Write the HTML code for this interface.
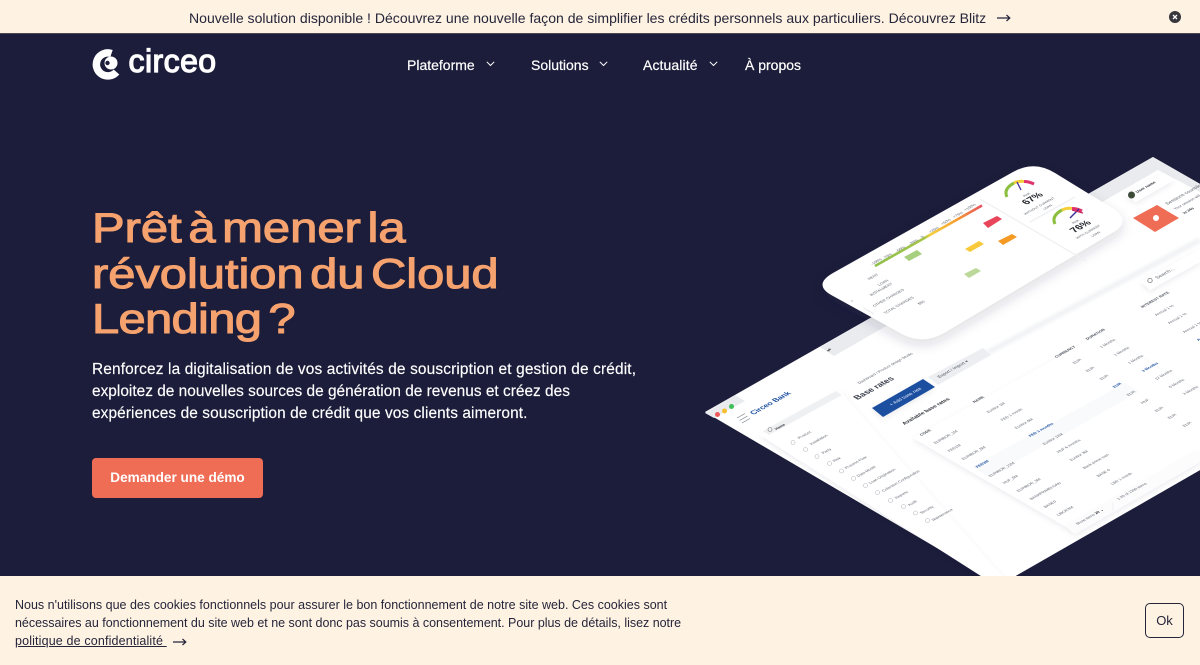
<!DOCTYPE html>
<html lang="fr"><head><meta charset="utf-8"><title>Circeo</title>
<style>
*{box-sizing:border-box;margin:0;padding:0}
html,body{width:1200px;height:665px;overflow:hidden;background:#1c1d3a;font-family:"Liberation Sans",sans-serif}
.t{position:absolute;white-space:nowrap;line-height:1}
#banner{position:absolute;left:0;top:0;width:1200px;height:34px;background:#fef3e3;border-bottom:1px solid #4a4950}
#banner .t{left:189px;top:11px;font-size:14.05px;color:#25253a}
nav a{position:absolute;top:58px;font-size:14px;line-height:14px;color:#fff;text-decoration:none;-webkit-text-stroke:.2px #fff;white-space:nowrap}
h1{position:absolute;left:92px;top:0;font-weight:400;font-size:42px;color:#f6a26e;-webkit-text-stroke:1.1px #f6a26e}
h1 span{position:absolute;left:0;white-space:nowrap;line-height:42px;transform:scaleX(1.165);transform-origin:0 0;word-spacing:-6px}
.p{position:absolute;left:92px;font-size:15.4px;line-height:15px;color:#fff;white-space:nowrap;-webkit-text-stroke:.15px #fff}
#cta{position:absolute;left:92px;top:458px;width:171px;height:40px;border-radius:4px;background:#ef6c55;color:#fff;font-weight:700;font-size:13.6px;line-height:40px;text-align:center;text-decoration:none}
#cookie{position:absolute;left:0;top:576px;width:1200px;height:89px;background:#fef3e3;color:#25253a}
#cookie .c{position:absolute;left:15px;font-size:12.5px;line-height:13px;white-space:nowrap}
#ok{position:absolute;left:1145px;top:27px;width:39px;height:35px;border:1px solid #25253a;border-radius:5px;font-size:13px;line-height:33px;text-align:center;color:#25253a}
#art{position:absolute;left:0;top:0;filter:blur(.35px)}
#art text{font-family:"Liberation Sans",sans-serif;font-size:4px;fill:#5f646f;translate:1.5px 1px}
#art .b{fill:#1c4fa0;font-weight:700}
#art .h{fill:#4b515c;font-weight:700}
#art .d{fill:#2a2e36;font-weight:700}
</style></head><body>

<svg id="art" width="1200" height="665" viewBox="0 0 1200 665">
<defs>
<filter id="sh" x="-20%" y="-20%" width="140%" height="140%"><feDropShadow dx="0" dy="5" stdDeviation="6" flood-color="#23264a" flood-opacity=".16"/></filter>
<filter id="sm" x="-20%" y="-20%" width="140%" height="140%"><feDropShadow dx="0" dy="2" stdDeviation="3" flood-color="#23264a" flood-opacity=".08"/></filter>
<filter id="bl"><feGaussianBlur stdDeviation="2"/></filter>
<linearGradient id="bar" x1="875" y1="0" x2="982" y2="0" gradientUnits="userSpaceOnUse">
<stop offset="0" stop-color="#8cbf4a"/><stop offset=".46" stop-color="#a6c64a"/><stop offset=".52" stop-color="#f7cf3e"/><stop offset=".75" stop-color="#f5a02f"/><stop offset="1" stop-color="#e8505f"/></linearGradient>
</defs>

<!-- main application plane -->
<polygon points="705,412 1153,157 1270,224 1270,430 1000,585" fill="#fff"/>
<!-- tab bar -->
<polygon points="820,347 1153,157 1200,184 1200,192 1158,170 834,356" fill="#e9ebee"/>
<polygon points="705,413 735,395 745,401 714,418" fill="#e9ebee"/>
<circle cx="717.500" cy="414.500" r="2.500" fill="#ee5a5a"/><circle cx="724.500" cy="411" r="2.500" fill="#f5c02f"/><circle cx="731.500" cy="406.500" r="2.500" fill="#3fbf57"/>
<path d="M827 351l4-2M829 348.500l0 3" stroke="#555" fill="none" stroke-width=".9"/>
<g stroke="#7a7f88" stroke-width=".7"><path d="M737 418l8-4.500M739.500 420.500l8-4.500M742 423l8-4.500"/></g>

<!-- sidebar sheet -->
<polygon points="760,435 840,391 1010,585 995,585" fill="#fff" filter="url(#sm)"/>
<polygon points="763,431 836,391 842,395 769,435" fill="#eef0f2"/>
<text transform="matrix(.87 -.49 .86 .5 775 429)" class="d" style="font-size:3.800px">Home</text>
<circle cx="770" cy="429.500" r="2" fill="none" stroke="#777" stroke-width=".6"/>
<text transform="matrix(.87 -.49 .86 .5 798 438)">Product</text>
<text transform="matrix(.87 -.49 .86 .5 810 444)">Installation</text>
<text transform="matrix(.87 -.49 .86 .5 822 453)">Party</text>
<text transform="matrix(.87 -.49 .86 .5 833 461)">Risk</text>
<text transform="matrix(.87 -.49 .86 .5 845 468)">Process Flow</text>
<text transform="matrix(.87 -.49 .86 .5 857 476)">Data Model</text>
<text transform="matrix(.87 -.49 .86 .5 869 483)">Loan Origination</text>
<text transform="matrix(.87 -.49 .86 .5 882 491)">Collection Configuration</text>
<text transform="matrix(.87 -.49 .86 .5 895 498)">Reports</text>
<text transform="matrix(.87 -.49 .86 .5 908 505)">Audit</text>
<text transform="matrix(.87 -.49 .86 .5 920 513)">Security</text>
<text transform="matrix(.87 -.49 .86 .5 932 520)">Maintenance</text>
<g fill="none" stroke="#b4b8bf" stroke-width=".6">
<circle cx="793" cy="442.500" r="2"/><circle cx="805.500" cy="449.500" r="2"/><circle cx="817" cy="456.500" r="2"/><circle cx="829.500" cy="463.500" r="2"/><circle cx="841.500" cy="471" r="2"/><circle cx="853.500" cy="478.500" r="2"/><circle cx="865.500" cy="485.500" r="2"/><circle cx="877.500" cy="492.500" r="2"/><circle cx="890.500" cy="500.500" r="2"/><circle cx="903.500" cy="506.500" r="2"/><circle cx="915.500" cy="513" r="2"/><circle cx="927.500" cy="520.500" r="2"/></g>
<text transform="matrix(.87 -.49 .86 .5 752 414)" class="b" style="font-size:7.500px">Circeo Bank</text>

<!-- content heading -->
<path d="M987 353L1200 240" stroke="#e6e8ec" stroke-width="3" filter="url(#bl)" fill="none"/>
<text transform="matrix(.87 -.49 .86 .5 858 383)">Dashboard  /  Product design Studio</text>
<text transform="matrix(.87 -.49 .86 .5 856 399)" style="font-size:8.500px;fill:#3d4250;font-weight:700">Base rates</text>
<polygon points="872,408 923,379 935,387 883,417" fill="#1c4fa0" filter="url(#sm)"/>
<text transform="matrix(.87 -.49 .86 .5 890 405)" style="fill:#e8eefa;font-size:5px">+ Add base rate</text>
<polygon points="928,377 983,348 991,355 938,385" fill="#eceef1"/>
<text transform="matrix(.87 -.49 .86 .5 938 377)" style="font-size:4.600px;fill:#4b5058">Export / Import ▾</text>
<text transform="matrix(.87 -.49 .86 .5 903 424)" class="d" style="font-size:5.500px">Available base rates</text>

<!-- table sheet -->
<polygon points="913,438 1100,334 1290,445 1290,399 1066,527" fill="#fff" filter="url(#sm)"/>
<polygon points="1066,527 1200,450 1200,462 1075,534" fill="#fcfcfd" filter="url(#sm)"/>
<polygon points="972,467 1125,383 1139,392 988,477" fill="#f9fafb"/>
<text transform="matrix(.87 -.49 .86 .5 920 435)" class="h">CODE</text>
<text transform="matrix(.87 -.49 .86 .5 973 402)" class="h">NAME</text>
<text transform="matrix(.87 -.49 .86 .5 1055 357)" class="h">CURRENCY</text>
<text transform="matrix(.87 -.49 .86 .5 1086 339)" class="h">DURATION</text>
<text transform="matrix(.87 -.49 .86 .5 1141 307)" class="h">INTEREST RATE</text>
<text transform="matrix(.87 -.49 .86 .5 934 443)">EURIBOR_1M</text>
<text transform="matrix(.87 -.49 .86 .5 948 451)">FED1M</text>
<text transform="matrix(.87 -.49 .86 .5 962 459)">EURIBOR_6M</text>
<text transform="matrix(.87 -.49 .86 .5 976 467)" class="b">FED3M</text>
<text transform="matrix(.87 -.49 .86 .5 989 476)">EURIBOR_12M</text>
<text transform="matrix(.87 -.49 .86 .5 1003 483)">HUF_6M</text>
<text transform="matrix(.87 -.49 .86 .5 1017 491)">EURIBOR_3M</text>
<text transform="matrix(.87 -.49 .86 .5 1030 499)">BANKPRIMELOAN</text>
<text transform="matrix(.87 -.49 .86 .5 1044 507)">BASE0</text>
<text transform="matrix(.87 -.49 .86 .5 1057 515)">LIBOR3M</text>
<text transform="matrix(.87 -.49 .86 .5 987 412)">Euribor 1M</text>
<text transform="matrix(.87 -.49 .86 .5 1001 420)">FED 1 month</text>
<text transform="matrix(.87 -.49 .86 .5 1015 428)">Euribor 6M</text>
<text transform="matrix(.87 -.49 .86 .5 1029 436)" class="b">FED 3 months</text>
<text transform="matrix(.87 -.49 .86 .5 1043 444)">Euribor 12M</text>
<text transform="matrix(.87 -.49 .86 .5 1057 452)">HUF 6 months</text>
<text transform="matrix(.87 -.49 .86 .5 1070 460)">Euribor 3M</text>
<text transform="matrix(.87 -.49 .86 .5 1083 468)">Bank prime loan</text>
<text transform="matrix(.87 -.49 .86 .5 1097 476)">BASE 0</text>
<text transform="matrix(.87 -.49 .86 .5 1111 484)">LBR 1 month</text>
<text transform="matrix(.87 -.49 .86 .5 1073 363)">EUR</text>
<text transform="matrix(.87 -.49 .86 .5 1086 371)">EUR</text>
<text transform="matrix(.87 -.49 .86 .5 1100 379)">EUR</text>
<text transform="matrix(.87 -.49 .86 .5 1113 387)" class="b">EUR</text>
<text transform="matrix(.87 -.49 .86 .5 1127 395)">EUR</text>
<text transform="matrix(.87 -.49 .86 .5 1141 403)">HUF</text>
<text transform="matrix(.87 -.49 .86 .5 1155 411)">EUR</text>
<text transform="matrix(.87 -.49 .86 .5 1168 418)">EUR</text>
<text transform="matrix(.87 -.49 .86 .5 1183 426)">EUR</text>
<text transform="matrix(.87 -.49 .86 .5 1100 347)">1 Months</text>
<text transform="matrix(.87 -.49 .86 .5 1114 355)">1 Months</text>
<text transform="matrix(.87 -.49 .86 .5 1128 363)">1 Months</text>
<text transform="matrix(.87 -.49 .86 .5 1142 371)" class="b">3 Months</text>
<text transform="matrix(.87 -.49 .86 .5 1155 379)">12 Months</text>
<text transform="matrix(.87 -.49 .86 .5 1169 387)">6 Months</text>
<text transform="matrix(.87 -.49 .86 .5 1183 394)">3 Months</text>
<text transform="matrix(.87 -.49 .86 .5 1155 315)">Annual 1 %</text>
<text transform="matrix(.87 -.49 .86 .5 1168 323)">Annual 1 %</text>
<text transform="matrix(.87 -.49 .86 .5 1183 332)">Annual 1 %</text>
<text transform="matrix(.87 -.49 .86 .5 1197 340)" class="b">Annual</text>
<text transform="matrix(.87 -.49 .86 .5 1076 524)">Show items  <tspan class="d">20 ⌄</tspan></text>
<text transform="matrix(.87 -.49 .86 .5 1117 499)">1-20 of 1200 items</text>
<path d="M1113 503L1113 511" stroke="#dfe1e5" stroke-width=".5"/>

<!-- top right widgets -->
<polygon points="1125,195 1164,173 1174,180 1136,202" fill="#fff" filter="url(#sm)"/>
<circle cx="1131.500" cy="195" r="3.500" fill="#3c4a38"/>
<text transform="matrix(.87 -.49 .86 .5 1136 192)" class="d" style="font-size:4.200px">User name</text>
<polygon points="1133,218 1157,205 1179,218 1155,232" fill="#ef6c55"/>
<circle cx="1156" cy="218" r="3" fill="#fff"/>
<text transform="matrix(.87 -.49 .86 .5 1166 204)" style="font-size:5px">Sessions countdown</text>
<text transform="matrix(.87 -.49 .86 .5 1174 209)">Your session will</text>
<text transform="matrix(.87 -.49 .86 .5 1183 213)" class="d">in 34s</text>
<polygon points="1141,282 1200,249 1200,262 1150,290" fill="#fff" filter="url(#sm)"/>
<circle cx="1150" cy="280.500" r="2.200" fill="none" stroke="#666" stroke-width=".7"/>
<text transform="matrix(.87 -.49 .86 .5 1156 278)" style="font-size:5px">Search...</text>

<!-- floating card -->
<path d="M833 273L1013 172Q1034 160 1055 173L1112 208Q1133 221 1112 233L944 333Q923 345 902 334L833 296Q812 285 833 273Z" fill="#fff" filter="url(#sh)"/>
<path d="M980 199L1086 261M1030 222L1075 197" stroke="#eef0f2" stroke-width="1.300" fill="none"/>
<path d="M875 266L982 205.500" stroke="url(#bar)" stroke-width="2.600" fill="none"/>
<text transform="matrix(.87 -.49 .86 .5 871 264)">-100%</text>
<text transform="matrix(.87 -.49 .86 .5 883 258)">-75%</text>
<text transform="matrix(.87 -.49 .86 .5 896 251)">-50%</text>
<text transform="matrix(.87 -.49 .86 .5 909 244)">-25%</text>
<text transform="matrix(.87 -.49 .86 .5 921 237)">0</text>
<text transform="matrix(.87 -.49 .86 .5 929 232)">+25%</text>
<text transform="matrix(.87 -.49 .86 .5 941 224)">+50%</text>
<text transform="matrix(.87 -.49 .86 .5 953 217)">+75%</text>
<text transform="matrix(.87 -.49 .86 .5 964 210)">+100%</text>
<text transform="matrix(.87 -.49 .86 .5 868 279)">RENT</text>
<text transform="matrix(.87 -.49 .86 .5 878 285)">LOAN</text>
<text transform="matrix(.87 -.49 .86 .5 870 295)">INSTALMENT</text>
<text transform="matrix(.87 -.49 .86 .5 873 306)">OTHER CHARGES</text>
<text transform="matrix(.87 -.49 .86 .5 884 313)">TOTAL CHARGES</text>
<text transform="matrix(.87 -.49 .86 .5 918 304)">$50</text>
<polygon points="904,257 917,250 922,254 909,261" fill="#a6cf7e"/>
<polygon points="965,249 979,241 984,244 970,252" fill="#f8c93b"/>
<polygon points="998,241 1012,234 1017,237 1003,245" fill="#f59a23"/>
<polygon points="983,223 997,216 1002,219 988,228" fill="#e8455a"/>
<polygon points="964,274 976,268 981,271 969,278" fill="#bcd99a"/>
<circle cx="852" cy="301" r="1.300" fill="#e2e4e8"/>
<path d="M864 308L874 314" stroke="#e5e7ea" stroke-width="1"/>

<!-- gauges -->
<g fill="none" stroke-width="3" stroke-linecap="butt">
<path d="M1007 197Q1003 189 1014 183" stroke="#8cbf3f"/>
<path d="M1014 183Q1019 180.500 1024 181.500" stroke="#f5cf3a"/>
<path d="M1024 181.500Q1029 181.500 1034 184" stroke="#e0336d"/>
<path d="M1017 182L1021 190" stroke="#3c2f9a" stroke-width="1.300"/>
</g>
<g fill="none" stroke-width="3" transform="translate(48 27)">
<path d="M1007 197Q1003 189 1014 183" stroke="#8cbf3f"/>
<path d="M1014 183Q1019 180.500 1024 181.500" stroke="#f5cf3a"/>
<path d="M1024 181.500Q1029 181.500 1034 184" stroke="#e0336d"/>
</g>
<path d="M1079 209L1070 218" stroke="#3c2f9a" stroke-width="1.400" fill="none"/>
<path d="M1072 210L1083 213" stroke="#c8245f" stroke-width="1.200" fill="none"/>
<text transform="matrix(.87 -.49 .86 .5 1023 196)" style="font-size:3.500px">Risk</text>
<text transform="matrix(.87 -.49 .86 .5 1025 204)" class="d" style="font-size:10px;fill:#22252c">67%</text>
<text transform="matrix(.87 -.49 .86 .5 1024 214)" style="font-size:3.500px">WITHOUT CURRENT</text>
<text transform="matrix(.87 -.49 .86 .5 1043 209)" style="font-size:3.500px">LOAN</text>
<text transform="matrix(.87 -.49 .86 .5 1072 223)" style="font-size:3.500px">Risk</text>
<text transform="matrix(.87 -.49 .86 .5 1073 232)" class="d" style="font-size:10px;fill:#22252c">76%</text>
<text transform="matrix(.87 -.49 .86 .5 1076 238)" style="font-size:3.500px">WITH CURRENT</text>
<text transform="matrix(.87 -.49 .86 .5 1091 236)" style="font-size:3.500px">LOAN</text>
</svg>

<div id="banner">
<span class="t">Nouvelle solution disponible ! Découvrez une nouvelle façon de simplifier les crédits personnels aux particuliers. Découvrez Blitz</span>
<svg style="position:absolute;left:997px;top:13px" width="14" height="10" viewBox="0 0 14 10"><path d="M0 5H12.500M9.500 2L12.800 5L9.500 8" fill="none" stroke="#25253a" stroke-width="1.200"/></svg>
<svg style="position:absolute;left:1168px;top:10px" width="14" height="14" viewBox="0 0 14 14"><circle cx="7" cy="7" r="6" fill="#37363c"/><path d="M5 5L9 9M9 5L5 9" stroke="#fff" stroke-width="1.300"/></svg>
</div>

<svg style="position:absolute;left:91px;top:49px" width="32" height="31" viewBox="0 0 32 31">
<path d="M20.500 4.500A11.500 11.500 0 1 0 25.500 23" fill="none" stroke="#fff" stroke-width="7.500"/>
<circle cx="20" cy="14" r="6.500" fill="#fff"/><circle cx="16.500" cy="14" r="2.200" fill="#1c1d3a"/>
</svg>
<div class="t" style="left:128.500px;top:43px;font-size:32px;line-height:36px;color:#fff;-webkit-text-stroke:1.200px #fff;letter-spacing:.45px">circeo</div>

<nav>
<a style="left:407px">Plateforme</a>
<svg style="position:absolute;left:486px;top:61px" width="9" height="6" viewBox="0 0 9 6"><path d="M.8 .8L4.500 4.500L8.200 .8" fill="none" stroke="#fff" stroke-width="1"/></svg>
<a style="left:531px">Solutions</a>
<svg style="position:absolute;left:598.500px;top:61px" width="9" height="6" viewBox="0 0 9 6"><path d="M.8 .8L4.500 4.500L8.200 .8" fill="none" stroke="#fff" stroke-width="1"/></svg>
<a style="left:643px;letter-spacing:.1px">Actualité</a>
<svg style="position:absolute;left:708.500px;top:61px" width="9" height="6" viewBox="0 0 9 6"><path d="M.8 .8L4.500 4.500L8.200 .8" fill="none" stroke="#fff" stroke-width="1"/></svg>
<a style="left:745px">À propos</a>
</nav>

<h1>
<span style="top:207px">Prêt à mener la</span>
<span style="top:253px;letter-spacing:-.05px">révolution du Cloud</span>
<span style="top:298px;word-spacing:-5px;letter-spacing:-.6px">Lending ?</span>
</h1>

<div class="p" style="top:362px;letter-spacing:.157px">Renforcez la digitalisation de vos activités de souscription et gestion de crédit,</div>
<div class="p" style="top:384px;letter-spacing:.02px">exploitez de nouvelles sources de génération de revenus et créez des</div>
<div class="p" style="top:406px;letter-spacing:.11px">expériences de souscription de crédit que vos clients aimeront.</div>

<a id="cta">Demander une démo</a>

<div id="cookie">
<div class="c" style="top:23px">Nous n'utilisons que des cookies fonctionnels pour assurer le bon fonctionnement de notre site web. Ces cookies sont</div>
<div class="c" style="top:41px;letter-spacing:-.02px">nécessaires au fonctionnement du site web et ne sont donc pas soumis à consentement. Pour plus de détails, lisez notre</div>
<div class="c" style="top:59px;text-decoration:underline;letter-spacing:.15px">politique de confidentialité&nbsp;</div>
<svg style="position:absolute;left:173px;top:61px" width="14" height="10" viewBox="0 0 14 10"><path d="M0 5H12.500M9.500 2L12.800 5L9.500 8" fill="none" stroke="#25253a" stroke-width="1.200"/></svg>
<div id="ok">Ok</div>
</div>
</body></html>
